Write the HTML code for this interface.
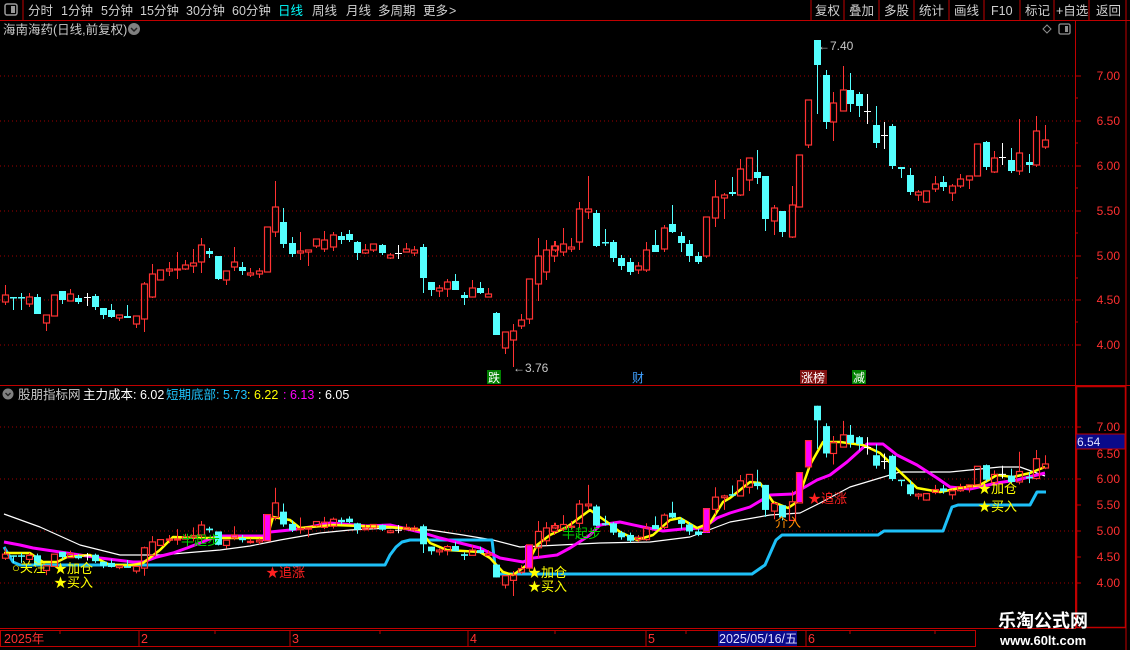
<!DOCTYPE html>
<html><head><meta charset="utf-8">
<style>
html,body{margin:0;padding:0;background:#000;width:1130px;height:650px;overflow:hidden}
svg{display:block}
text{font-family:"Liberation Sans","Noto Sans CJK SC",sans-serif}
</style></head>
<body>
<svg id="s" width="1130" height="650" viewBox="0 0 1130 650" xmlns="http://www.w3.org/2000/svg">
<rect width="1130" height="650" fill="#000"/>
<!-- toolbar -->
<rect x="5" y="4" width="12" height="11" rx="2" fill="none" stroke="#9a9a9a" stroke-width="1.5"/>
<rect x="11" y="6" width="4" height="7" fill="#9a9a9a"/>
<line x1="23" y1="0" x2="23" y2="20" stroke="#c00000"/>
<line x1="0" y1="20.5" x2="1130" y2="20.5" stroke="#c00000"/>
<g font-size="12.5" fill="#d0d0d0">
<text x="28" y="15">分时</text><text x="61" y="15">1分钟</text><text x="101" y="15">5分钟</text>
<text x="140" y="15">15分钟</text><text x="186" y="15">30分钟</text><text x="232" y="15">60分钟</text>
<text x="278" y="15" fill="#00ffff">日线</text><text x="312" y="15">周线</text><text x="346" y="15">月线</text>
<text x="378" y="15">多周期</text><text x="423" y="15">更多</text><text x="449" y="15">&gt;</text>
<text x="815" y="15">复权</text><text x="849" y="15">叠加</text><text x="884" y="15">多股</text>
<text x="919" y="15">统计</text><text x="954" y="15">画线</text><text x="991" y="15">F10</text>
<text x="1025" y="15">标记</text><text x="1056" y="15">+自选</text><text x="1096" y="15">返回</text>
</g>
<g stroke="#c00000">
<line x1="811" y1="0" x2="811" y2="20"/><line x1="844" y1="0" x2="844" y2="20"/><line x1="879" y1="0" x2="879" y2="20"/>
<line x1="914" y1="0" x2="914" y2="20"/><line x1="949" y1="0" x2="949" y2="20"/><line x1="984" y1="0" x2="984" y2="20"/>
<line x1="1020" y1="0" x2="1020" y2="20"/><line x1="1054" y1="0" x2="1054" y2="20"/><line x1="1089" y1="0" x2="1089" y2="20"/>
<line x1="1126" y1="0" x2="1126" y2="650"/>
<line x1="1075.5" y1="20" x2="1075.5" y2="628"/>
<line x1="0" y1="385.5" x2="1130" y2="385.5"/>
</g>
<!-- title -->
<text x="3" y="34" font-size="12.5" fill="#c8c8c8">海南海药(日线,前复权)</text>
<circle cx="134" cy="29" r="6" fill="#808080"/><path d="M131 28l3 3 3-3" stroke="#222" stroke-width="1.5" fill="none"/>
<path d="M1047 25l4 4-4 4-4-4z" stroke="#909090" fill="none"/>
<rect x="1059" y="24" width="11" height="10" rx="1.5" fill="none" stroke="#909090" stroke-width="1.3"/><rect x="1065" y="26" width="3" height="6" fill="#909090"/>
<!-- grids -->
<g stroke="#a00000" stroke-dasharray="1,3">
<line x1="0" y1="76" x2="1075" y2="76"/><line x1="0" y1="121" x2="1075" y2="121"/><line x1="0" y1="166" x2="1075" y2="166"/>
<line x1="0" y1="211" x2="1075" y2="211"/><line x1="0" y1="256" x2="1075" y2="256"/><line x1="0" y1="300" x2="1075" y2="300"/><line x1="0" y1="345" x2="1075" y2="345"/>
<line x1="0" y1="427" x2="1075" y2="427"/><line x1="0" y1="479" x2="1075" y2="479"/><line x1="0" y1="531" x2="1075" y2="531"/><line x1="0" y1="583" x2="1075" y2="583"/>
</g>
<!-- axis labels -->
<g font-size="12" fill="#ff3030" text-anchor="end">
<text x="1120" y="80">7.00</text><text x="1120" y="125">6.50</text><text x="1120" y="170">6.00</text><text x="1120" y="215">5.50</text>
<text x="1120" y="260">5.00</text><text x="1120" y="304">4.50</text><text x="1120" y="349">4.00</text>
<text x="1120" y="431">7.00</text><text x="1120" y="458">6.50</text><text x="1120" y="483">6.00</text><text x="1120" y="509">5.50</text>
<text x="1120" y="535">5.00</text><text x="1120" y="561">4.50</text><text x="1120" y="587">4.00</text>
</g>
<g stroke="#c00000">
<line x1="1075" y1="76" x2="1081" y2="76"/><line x1="1075" y1="121" x2="1081" y2="121"/><line x1="1075" y1="166" x2="1081" y2="166"/>
<line x1="1075" y1="211" x2="1081" y2="211"/><line x1="1075" y1="256" x2="1081" y2="256"/><line x1="1075" y1="300" x2="1081" y2="300"/><line x1="1075" y1="345" x2="1081" y2="345"/>
<line x1="1075" y1="98" x2="1078" y2="98"/><line x1="1075" y1="143" x2="1078" y2="143"/><line x1="1075" y1="188" x2="1078" y2="188"/><line x1="1075" y1="233" x2="1078" y2="233"/><line x1="1075" y1="278" x2="1078" y2="278"/><line x1="1075" y1="322" x2="1078" y2="322"/>
<line x1="1075" y1="427" x2="1081" y2="427"/><line x1="1075" y1="479" x2="1081" y2="479"/><line x1="1075" y1="505" x2="1081" y2="505"/><line x1="1075" y1="531" x2="1081" y2="531"/><line x1="1075" y1="557" x2="1081" y2="557"/><line x1="1075" y1="583" x2="1081" y2="583"/>
</g>
<rect x="1076.5" y="386.5" width="49" height="241" fill="none" stroke="#c00000" stroke-width="1.5"/>
<rect x="1076" y="434" width="49" height="15" fill="#0a0a8a" stroke="#c00000"/>
<text x="1077" y="446" font-size="12" fill="#e0e0ff">6.54</text>

<g id="lines" fill="none" stroke-linejoin="round">
<polyline stroke="#fff" stroke-width="1.2" points="4,514 40,527 80,545 120,555 160,555 220,550 250,546 280,540 320,533 350,530 390,528 430,530 463,535 493,540 520,547 560,545 600,543 650,542 690,537 730,522 770,515 800,513 820,503 850,487 880,478 900,472 950,472 1000,467 1020,467 1045,476"/>
<polyline stroke="#1ec0f8" stroke-width="3" points="4,547 13,562 20,565 385,565 390,555 396,547 402,542 410,540 492,540 496,574 752,574 765,565 776,540 782,535 878,535 884,531 943,531 952,507 958,505 1030,505 1037,492 1046,492"/>
<polyline stroke="#ff00ff" stroke-width="3" points="4,542 20,545 33,548 100,558 133,562 143,562 157,557 173,553 187,548 200,543 217,536 263,536 270,532 290,530 310,527 330,523 367,526 390,525 420,532 440,538 460,543 480,548 500,558 523,562 533,558 557,555 570,548 590,535 600,525 620,522 643,527 663,531 683,529 703,528 717,518 730,513 750,507 770,495 793,494 817,480 830,475 847,462 867,444 883,444 897,455 917,465 937,478 950,487 970,489 997,483 1017,480 1045,473"/>
<polyline stroke="#ffff00" stroke-width="2.5" points="4,553 30,553 43,562 57,562 67,557 90,555 110,565 133,565 143,563 160,550 173,537 200,538 267,538 273,517 290,520 300,528 333,525 390,527 420,530 430,543 447,550 480,552 490,558 503,572 513,575 527,565 537,545 550,535 567,527 590,510 607,522 620,532 637,540 653,535 670,520 680,518 697,528 710,523 723,502 730,498 750,482 760,483 773,502 788,508 797,502 810,465 823,442 840,442 863,445 880,453 900,472 917,488 940,492 960,488 980,485 997,475 1013,477 1030,473 1045,467"/>
</g>
<g fill="#ff00ff">
<rect x="263" y="514" width="7" height="27"/><rect x="525" y="545" width="7" height="23"/><rect x="703" y="508" width="7" height="25"/>
<rect x="796" y="472" width="7" height="30"/><rect x="805" y="440" width="7" height="27"/>
</g>
<g id="candles"></g>

<!-- price labels top -->
<text x="513" y="372" font-size="12" fill="#c8c8c8">←3.76</text>
<text x="818" y="50" font-size="12" fill="#c8c8c8">←7.40</text>
<rect x="487" y="370" width="14" height="14" fill="#008000"/><text x="488" y="382" font-size="12" fill="#fff">跌</text>
<text x="632" y="382" font-size="12" fill="#40a0ff">财</text>
<rect x="800" y="370" width="27" height="14" fill="#801010"/><text x="801" y="382" font-size="12" fill="#fff">涨榜</text>
<rect x="852" y="370" width="14" height="14" fill="#008000"/><text x="853" y="382" font-size="12" fill="#fff">减</text>

<!-- bottom header -->
<circle cx="8" cy="394" r="5.5" fill="#808080"/><path d="M5.5 393l2.5 2.5 2.5-2.5" stroke="#222" stroke-width="1.4" fill="none"/>
<g font-size="12.5">
<text x="18" y="399" fill="#c8c8c8">股朋指标网</text>
<text x="83" y="399" fill="#fff">主力成本: 6.02</text>
<text x="166" y="399" fill="#1ec0f8">短期底部: 5.73</text>
<text x="247" y="399" fill="#ffff00">: 6.22</text>
<text x="283" y="399" fill="#ff00ff">: 6.13</text>
<text x="318" y="399" fill="#fff">: 6.05</text>
</g>
<!-- bottom signals -->
<g font-size="13">
<text x="12" y="572" fill="#ffff00">○关注</text>
<text x="54" y="573" fill="#ffff00">★加仓</text><text x="54" y="587" fill="#ffff00">★买入</text>
<text x="181" y="545" fill="#00d000">半起步</text>
<text x="266" y="577" fill="#ff2020">★追涨</text>
<text x="528" y="577" fill="#ffff00">★加仓</text><text x="528" y="591" fill="#ffff00">★买入</text>
<text x="562" y="538" fill="#00d000">半起步</text>
<text x="808" y="503" fill="#ff2020">★追涨</text>
<text x="775" y="527" fill="#ff8c00">介入</text>
<text x="978" y="493" fill="#ffff00">★加仓</text><text x="978" y="511" fill="#ffff00">★买入</text>
</g>
<!-- date bar -->
<line x1="0" y1="628.5" x2="1076" y2="628.5" stroke="#c00000"/>
<rect x="0.5" y="630.5" width="975" height="16" fill="none" stroke="#c00000"/>
<rect x="718" y="631" width="79" height="15" fill="#0a0a8a"/>
<g stroke="#c00000">
<line x1="139" y1="630" x2="139" y2="647"/><line x1="290" y1="630" x2="290" y2="647"/><line x1="468" y1="630" x2="468" y2="647"/>
<line x1="646" y1="630" x2="646" y2="647"/><line x1="806" y1="630" x2="806" y2="647"/>
<line x1="60" y1="630" x2="60" y2="634"/><line x1="215" y1="630" x2="215" y2="634"/><line x1="380" y1="630" x2="380" y2="634"/>
<line x1="555" y1="630" x2="555" y2="634"/><line x1="686" y1="630" x2="686" y2="634"/><line x1="850" y1="630" x2="850" y2="634"/><line x1="935" y1="630" x2="935" y2="634"/>
</g>
<g font-size="12.5" fill="#ff3030">
<text x="4" y="643">2025年</text><text x="141" y="643">2</text><text x="292" y="643">3</text><text x="470" y="643">4</text>
<text x="648" y="643">5</text><text x="808" y="643">6</text>
</g>
<text x="719" y="643" font-size="12.5" fill="#e0e0ff">2025/05/16/五</text>
<text x="998" y="627" font-size="18" font-weight="bold" fill="#fff" font-family="'Noto Sans CJK SC',sans-serif">乐淘公式网</text>
<text x="1000" y="645" font-size="13" font-weight="bold" fill="#fff" font-family="'Liberation Serif',serif">www.60lt.com</text>
</svg>
<script>
(function(){
var L=[
['r',295,302,285,305],['c',297,298,297,310],['c',297,298,293,310],['r',297,304,293,307],['c',297,314,294,314],
['r',315,323,315,331],['r',295,316,295,316],['c',291,300,291,304],['r',294,301,289,301],['c',298,302,295,304],
['w',297,297,293,306],['c',296,307,294,310],['c',308,315,308,319],['c',310,317,304,318],['r',315,318,315,321],
['c',316,318,305,318],['r',316,324,316,328],['r',284,319,282,332],['r',274,297,264,298],['r',270,280,270,280],
['r',269,271,262,276],['r',269,270,252,279],['r',265,269,260,270],['r',263,266,249,273],['r',245,262,238,273],
['c',251,254,248,258],['c',256,279,256,280],['r',271,280,271,285],['r',262,267,247,271],['c',267,271,262,275],
['r',273,275,268,277],['r',271,274,268,278],['r',227,272,227,272],['r',207,232,181,237],['c',222,244,208,248],
['c',243,254,237,257],['r',251,253,232,260],['r',250,252,250,266],['r',239,246,239,248],['r',240,249,231,252],
['r',235,247,232,251],['c',236,240,232,244],['c',234,240,230,242],['c',242,253,241,260],['r',250,253,244,254],
['r',244,250,244,252],['c',245,253,244,255],['r',255,258,253,259],['w',253,253,245,259],['r',249,252,243,252],
['r',250,253,246,256],
['c',247,278,244,293],['c',282,290,282,296],['r',288,291,285,297],['r',282,289,279,297],['c',281,290,274,290],
['c',295,298,292,305],['r',288,297,280,297],['c',288,293,282,294],['r',294,297,288,297],['c',313,335,312,335],
['r',332,348,332,354],['r',331,340,324,367],['r',320,326,314,329],['r',279,319,279,324],['r',256,284,238,301],
['r',250,272,240,280],['r',246,256,241,262]
];
var R=[
[43,'r',246,250,241,252],[67,'r',244,252,228,256],[91,'r',247,249,238,252],[116,'r',209,242,202,250],[143,'r',209,212,176,219],
[167,'c',213,246,210,247],[193,'c',242,243,229,246],[217,'c',242,258,240,262],[241,'c',258,266,255,270],[266,'c',262,272,258,275],
[290,'r',266,270,262,274],[315,'r',250,270,242,272],[340,'c',245,252,230,252],[367,'r',228,249,225,252],[391,'c',224,232,205,233],
[418,'c',236,243,232,252],[441,'c',244,256,240,262],[466,'c',256,262,252,264],[491,'r',217,256,217,258],[519,'r',197,218,180,227],
[543,'r',195,198,193,219],[568,'c',192,194,177,196],[593,'r',169,195,159,196],[619,'r',158,180,158,191],[643,'c',172,178,150,184],
[666,'c',176,219,176,231],[693,'r',208,221,205,235],[717,'c',211,232,211,237],[744,'r',205,237,186,238],[767,'r',155,207,155,207],
[794,'r',100,145,100,148],[818,'c',40,65,40,114],[845,'c',75,122,70,129],[868,'r',103,122,92,141],[895,'r',90,111,66,111],
[918,'c',90,104,73,112],[945,'c',94,106,92,117],[968,'w',111,111,94,124],[995,'c',125,143,106,148],[1018,'w',135,135,122,149],
[1042,'c',126,166,124,169],[1068,'c',167,169,167,178],[1094,'c',175,192,168,195],[1118,'r',192,195,190,201],[1142,'r',191,202,191,203],
[1169,'r',184,189,176,192],[1193,'c',182,187,176,191],[1219,'r',186,193,184,201],[1243,'r',179,186,174,188],[1270,'r',176,180,176,189],
[1293,'r',144,176,144,176],[1320,'c',142,167,141,170],[1344,'r',158,172,151,173],[1368,'w',157,157,143,165],[1394,'c',160,171,148,173],
[1418,'r',153,171,119,175],[1445,'c',162,165,154,173],[1468,'r',131,165,116,167],[1494,'r',140,147,125,149]
];
var all=[];
L.forEach(function(c,i){all.push([4.5+i*8.2,c[0],c[1],c[2],c[3],c[4]]);});
R.forEach(function(c){all.push([540+c[0]/2.958,c[1],c[2],c[3],c[4],c[5]]);});
var out='';
function draw(x,t,bt,bb,wt,wb,f){
  if(f){bt=f(bt);bb=f(bb);wt=f(wt);wb=f(wb);}
  x=Math.round(x);
  var col=t=='r'?'#ff3232':(t=='c'?'#54ffff':'#ffffff');
  if(t=='r'){
    if(wt<bt)out+='<line x1="'+(x+.5)+'" y1="'+wt+'" x2="'+(x+.5)+'" y2="'+bt+'" stroke="'+col+'"/>';
    if(wb>bb)out+='<line x1="'+(x+.5)+'" y1="'+bb+'" x2="'+(x+.5)+'" y2="'+wb+'" stroke="'+col+'"/>';
    out+='<rect x="'+(x-2.5)+'" y="'+bt+'" width="6" height="'+Math.max(1,bb-bt)+'" fill="none" stroke="'+col+'" stroke-width="1.2"/>';
  }else if(t=='c'){
    out+='<line x1="'+(x+.5)+'" y1="'+wt+'" x2="'+(x+.5)+'" y2="'+wb+'" stroke="'+col+'"/>';
    out+='<rect x="'+(x-3)+'" y="'+bt+'" width="7" height="'+Math.max(1.5,bb-bt)+'" fill="'+col+'"/>';
  }else{
    out+='<line x1="'+(x+.5)+'" y1="'+wt+'" x2="'+(x+.5)+'" y2="'+wb+'" stroke="'+col+'"/>';
    out+='<line x1="'+(x-3)+'" y1="'+(bt+.5)+'" x2="'+(x+4)+'" y2="'+(bt+.5)+'" stroke="'+col+'"/>';
  }
}
function tb(y){return 426.7+(y-76)*0.582;}
all.forEach(function(c){draw(c[0],c[1],c[2],c[3],c[4],c[5]);});
all.forEach(function(c){draw(c[0],c[1],c[2],c[3],c[4],c[5],tb);});
document.getElementById('candles').innerHTML=out;
})();
</script>
</body></html>
